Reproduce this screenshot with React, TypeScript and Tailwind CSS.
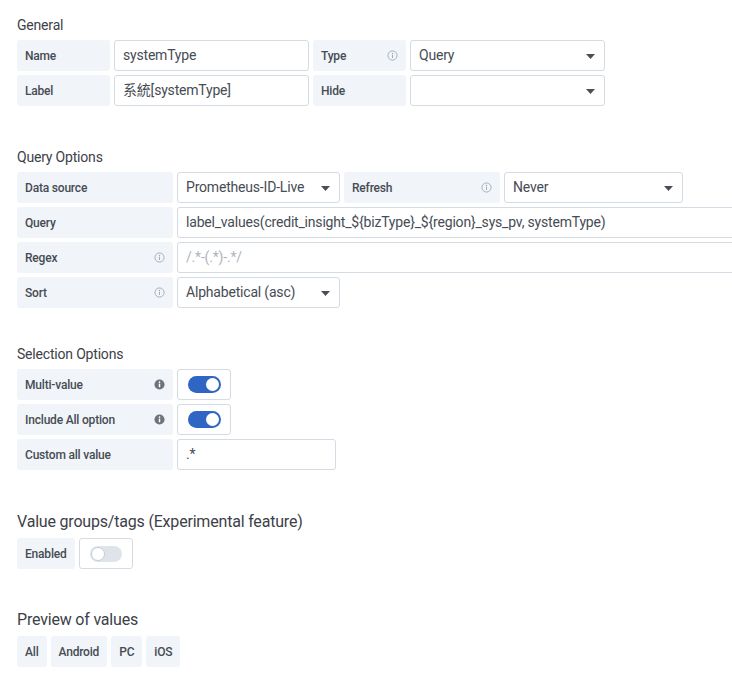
import React from "react";

const font = { fontFamily: 'Roboto, "Noto Sans CJK SC", sans-serif' };

function InfoOutline() {
  return (
    <svg width="11" height="11" viewBox="0 0 12 12" className="shrink-0">
      <circle cx="6" cy="6" r="5" fill="none" stroke="#a3abb5" strokeWidth="1" />
      <circle cx="6" cy="3.7" r="0.75" fill="#a3abb5" />
      <rect x="5.45" y="5.1" width="1.1" height="3.6" fill="#a3abb5" />
    </svg>
  );
}

function InfoFilled() {
  return (
    <svg width="11" height="11" viewBox="0 0 12 12" className="shrink-0">
      <circle cx="6" cy="6" r="5.5" fill="#6d737c" />
      <circle cx="6" cy="3.4" r="0.95" fill="#fff" />
      <rect x="5.2" y="5" width="1.6" height="4" fill="#fff" />
    </svg>
  );
}

function Caret() {
  return (
    <svg width="9" height="5" viewBox="0 0 9 5" className="shrink-0">
      <path d="M0 0 L9 0 L4.5 5 Z" fill="#4a4f57" />
    </svg>
  );
}

function Label({
  children,
  w,
  info,
}: {
  children: React.ReactNode;
  w: string;
  info?: "outline" | "filled";
}) {
  return (
    <div
      className={`${w} h-[31px] shrink-0 rounded-[3px] bg-[#f1f4f8] flex items-center justify-between pl-[8px] pr-[8px] text-[12px] font-medium text-[#464c54]`}
    >
      <span>{children}</span>
      {info === "outline" && <InfoOutline />}
      {info === "filled" && <InfoFilled />}
    </div>
  );
}

function Input({
  w,
  value,
  placeholder,
}: {
  w: string;
  value?: string;
  placeholder?: string;
}) {
  return (
    <div
      className={`${w} h-[31px] shrink-0 rounded-[3px] border border-[#d5dbe3] bg-white flex items-center pl-[8px] text-[14px] text-[#464c54] whitespace-nowrap overflow-hidden`}
    >
      {value ? <span>{value}</span> : <span className="text-[#aeb5be]">{placeholder}</span>}
    </div>
  );
}

function Select({ w, value }: { w: string; value: string }) {
  return (
    <div
      className={`${w} h-[31px] shrink-0 rounded-[3px] border border-[#d5dbe3] bg-white flex items-center justify-between pl-[8px] pr-[9px] text-[14px] text-[#464c54]`}
    >
      <span>{value}</span>
      <span className="pt-[2px]">
        <Caret />
      </span>
    </div>
  );
}

function Switch({ on }: { on: boolean }) {
  return (
    <div className="w-[54px] h-[31px] shrink-0 rounded-[3px] border border-[#d5dbe3] bg-white flex items-center justify-center">
      {on ? (
        <div className="w-[33px] h-[17px] rounded-full bg-[#2f66c4] flex items-center justify-end pr-[2px]">
          <div className="w-[13px] h-[13px] rounded-full bg-white" />
        </div>
      ) : (
        <div className="w-[32px] h-[16px] rounded-full bg-[#dfe4eb] flex items-center justify-start pl-[1px]">
          <div className="w-[14px] h-[14px] rounded-full bg-white border border-[#c5ccd5]" />
        </div>
      )}
    </div>
  );
}

function Heading({ children, big }: { children: React.ReactNode; big?: boolean }) {
  return (
    <div
      className={
        big
          ? "text-[16px] leading-[24px] text-[#3d4148] mb-[4px]"
          : "text-[14px] leading-[20px] text-[#3d4148] mb-[5px]"
      }
    >
      {children}
    </div>
  );
}

function Chip({ children }: { children: React.ReactNode }) {
  return (
    <div className="h-[31px] rounded-[3px] bg-[#f1f4f8] flex items-center px-[8px] text-[12px] font-medium text-[#464c54]">
      {children}
    </div>
  );
}

export default function App() {
  return (
    <div className="w-[732px] h-[682px] overflow-hidden bg-white tracking-[-0.012em]" style={font}>
      <div className="pl-[17px] pt-[15px]">
        <Heading>General</Heading>
        <div className="flex flex-col gap-[4px]">
          <div className="flex gap-[4px]">
            <Label w="w-[93px]">Name</Label>
            <Input w="w-[195px]" value="systemType" />
            <Label w="w-[93px]" info="outline">Type</Label>
            <Select w="w-[195px]" value="Query" />
          </div>
          <div className="flex gap-[4px]">
            <Label w="w-[93px]">Label</Label>
            <Input w="w-[195px]" value="系統[systemType]" />
            <Label w="w-[93px]">Hide</Label>
            <Select w="w-[195px]" value="" />
          </div>
        </div>

        <div className="mt-[41px]">
          <Heading>Query Options</Heading>
          <div className="flex flex-col gap-[4px]">
            <div className="flex gap-[4px]">
              <Label w="w-[156px]">Data source</Label>
              <Select w="w-[163px]" value="Prometheus-ID-Live" />
              <Label w="w-[156px]" info="outline">Refresh</Label>
              <Select w="w-[179px]" value="Never" />
            </div>
            <div className="flex gap-[4px]">
              <Label w="w-[156px]">Query</Label>
              <Input
                w="w-[620px]"
                value="label_values(credit_insight_${bizType}_${region}_sys_pv, systemType)"
              />
            </div>
            <div className="flex gap-[4px]">
              <Label w="w-[156px]" info="outline">Regex</Label>
              <Input w="w-[620px]" placeholder="/.*-(.*)-.*/" />
            </div>
            <div className="flex gap-[4px]">
              <Label w="w-[156px]" info="outline">Sort</Label>
              <Select w="w-[163px]" value="Alphabetical (asc)" />
            </div>
          </div>
        </div>

        <div className="mt-[36px]">
          <Heading>Selection Options</Heading>
          <div className="flex flex-col gap-[4px]">
            <div className="flex gap-[4px]">
              <Label w="w-[156px]" info="filled">Multi-value</Label>
              <Switch on />
            </div>
            <div className="flex gap-[4px]">
              <Label w="w-[156px]" info="filled">Include All option</Label>
              <Switch on />
            </div>
            <div className="flex gap-[4px]">
              <Label w="w-[156px]">Custom all value</Label>
              <Input w="w-[159px]" value=".*" />
            </div>
          </div>
        </div>

        <div className="mt-[40px]">
          <Heading big>Value groups/tags (Experimental feature)</Heading>
          <div className="flex gap-[4px]">
            <Label w="w-auto">Enabled</Label>
            <Switch on={false} />
          </div>
        </div>

        <div className="mt-[39px]">
          <Heading big>Preview of values</Heading>
          <div className="flex gap-[4px]">
            <Chip>All</Chip>
            <Chip>Android</Chip>
            <Chip>PC</Chip>
            <Chip>iOS</Chip>
          </div>
        </div>
      </div>
    </div>
  );
}
